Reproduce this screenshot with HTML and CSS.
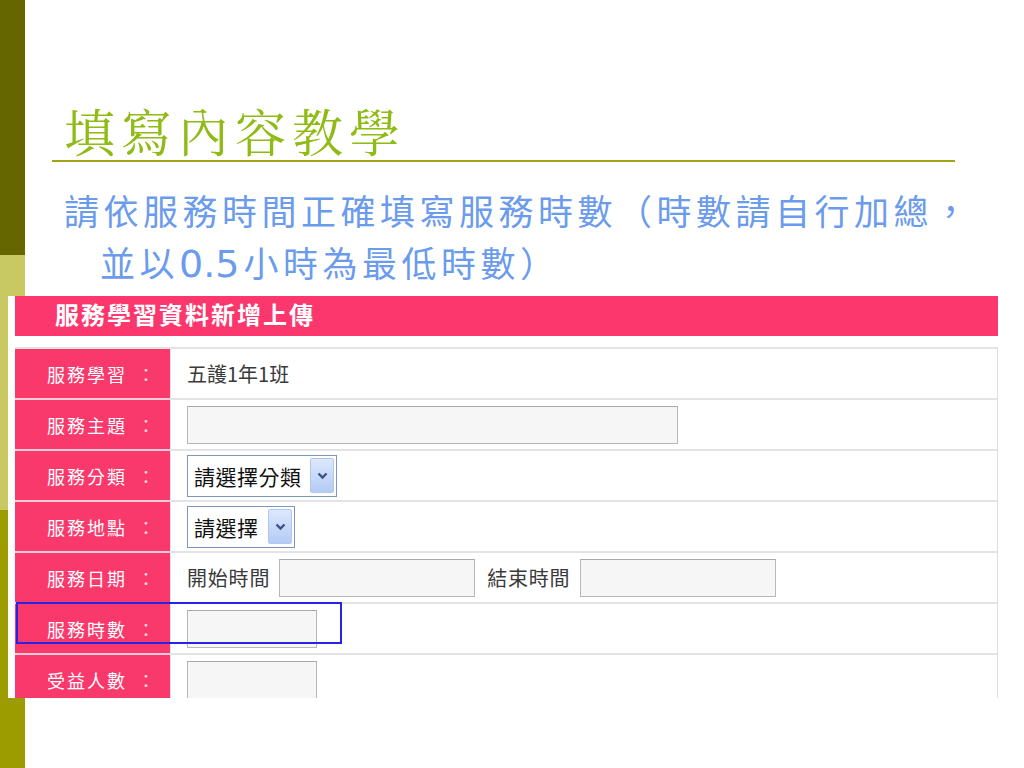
FILE: index.html
```html
<!DOCTYPE html>
<html lang="zh-Hant">
<head>
  <meta charset="UTF-8" />
  <meta name="viewport" content="width=device-width, initial-scale=1.0"/>
  <title>填寫內容教學</title>
  <link rel="stylesheet" href="styles.css">
</head>
<body>
  <div class="slide">
    <h1 class="title">填寫內容教學</h1>
    <p class="lead">請依服務時間正確填寫服務時數（時數請自行加總，<br>並以<span class="num">0.5</span>小時為最低時數）</p>

    <div class="shot">
      <div class="shot-head">服務學習資料新增上傳</div>
      <table class="form">
        <tr>
          <th>服務學習<span class="colon">：</span></th>
          <td>五護1年1班</td>
        </tr>
        <tr>
          <th>服務主題<span class="colon">：</span></th>
          <td><input type="text" class="field field-wide"></td>
        </tr>
        <tr>
          <th>服務分類<span class="colon">：</span></th>
          <td>
            <span class="select select-wide">
              <span class="select-text">請選擇分類</span>
              <span class="select-btn"><svg width="11" height="8" viewBox="0 0 11 8"><path d="M1.5 1.5 L5.5 5.5 L9.5 1.5" fill="none" stroke="#3b5283" stroke-width="2.4"/></svg></span>
            </span>
          </td>
        </tr>
        <tr>
          <th>服務地點<span class="colon">：</span></th>
          <td>
            <span class="select select-short">
              <span class="select-text">請選擇</span>
              <span class="select-btn"><svg width="11" height="8" viewBox="0 0 11 8"><path d="M1.5 1.5 L5.5 5.5 L9.5 1.5" fill="none" stroke="#3b5283" stroke-width="2.4"/></svg></span>
            </span>
          </td>
        </tr>
        <tr>
          <th>服務日期<span class="colon">：</span></th>
          <td>
            <span class="date-row">
              <span class="date-label">開始時間</span>
              <input type="text" class="field field-date">
              <span class="date-label date-label-end">結束時間</span>
              <input type="text" class="field field-date">
            </span>
          </td>
        </tr>
        <tr>
          <th>服務時數<span class="colon">：</span></th>
          <td><input type="text" class="field field-small"></td>
        </tr>
        <tr>
          <th>受益人數<span class="colon">：</span></th>
          <td><input type="text" class="field field-small"></td>
        </tr>
      </table>
      <div class="highlight"></div>
    </div>
  </div>
</body>
</html>
```

FILE: styles.css
```css
* {
  margin: 0;
  padding: 0;
  box-sizing: border-box;
}

body {
  width: 1024px;
  min-height: 768px;
  background:
    linear-gradient(to bottom, #666600 0, #666600 255px, #c9c964 255px, #c9c964 510px, #9c9c00 510px) 0 0 / 25px 768px no-repeat,
    #fff;
  font-family: "Noto Sans CJK TC", sans-serif;
  overflow: hidden;
}

.slide {
  padding-top: 100px;
}

.title {
  margin-left: 52px;
  width: 903px;
  padding-left: 12px;
  height: 62px;
  border-bottom: 2px solid #a3a31a;
  font-family: "Noto Serif CJK TC", "Noto Sans CJK TC", serif;
  font-size: 51px;
  font-weight: 400;
  line-height: 60px;
  letter-spacing: 6px;
  color: #8fbb14;
}

.lead {
  margin-top: 22px;
  padding-left: 100px;
  text-indent: -36px;
  font-size: 35px;
  line-height: 52px;
  letter-spacing: 4.5px;
  color: #6b9bec;
}

.lead .num {
  font-family: "DejaVu Sans", sans-serif;
  font-size: 38px;
  letter-spacing: 0;
  line-height: 1;
  margin-right: 4px;
}

.shot {
  position: relative;
  margin-top: 8px;
  margin-left: 8px;
  width: 1000px;
  height: 402px;
  padding: 0 9px 0 7px;
  background: #fff;
  overflow: hidden;
}

.shot-head {
  width: 983px;
  height: 40px;
  padding-left: 40px;
  background: #fc376d;
  color: #fff;
  font-size: 24px;
  font-weight: 700;
  line-height: 36px;
  letter-spacing: 2px;
}

.form {
  margin-top: 11px;
  width: 983px;
  border-collapse: separate;
  border-spacing: 0;
  border-right: 1px solid #dedede;
}

.form th,
.form td {
  height: 51px;
  vertical-align: middle;
  text-align: left;
}

.form th {
  width: 155px;
  padding-left: 32px;
  background: #f9386b;
  border-top: 2px solid #f6ccd8;
  color: #fff;
  font-size: 18px;
  font-weight: 400;
  letter-spacing: 2px;
}

.form tr:first-child th,
.form tr:first-child td {
  border-top: 2px solid #e3e3e3;
}

.form td {
  padding-left: 16px;
  border-top: 2px solid #e3e3e3;
  border-left: 1px solid #e6e6e6;
  color: #3a3a3a;
  font-size: 20px;
}

.colon {
  margin-left: 10px;
  color: #ffd9e3;
}

.field {
  display: inline-block;
  height: 38px;
  border: 1px solid #b8b8b8;
  border-top-color: #a9a9a9;
  background: #f6f6f6;
  vertical-align: middle;
}

.field-wide {
  width: 491px;
}

.field-date {
  width: 196px;
}

.field-small {
  width: 130px;
}

.select {
  display: inline-flex;
  align-items: center;
  justify-content: space-between;
  height: 42px;
  padding: 0 2px 0 6px;
  border: 1px solid #7c98b9;
  background: #fff;
  vertical-align: middle;
}

.select-wide {
  width: 150px;
}

.select-short {
  width: 108px;
}

.select-text {
  color: #111;
  font-size: 21px;
  letter-spacing: 0.5px;
}

.select-btn {
  display: flex;
  align-items: center;
  justify-content: center;
  width: 24px;
  height: 35px;
  border: 1px solid #b3c6ec;
  border-radius: 2px;
  background: linear-gradient(to bottom, #dce8fd, #b4cbf6);
}

.date-row {
  display: flex;
  align-items: center;
}

.date-label {
  font-size: 20px;
  letter-spacing: 0.8px;
  margin-right: 9px;
}

.date-label-end {
  margin-left: 12px;
  margin-right: 10px;
}

.highlight {
  position: absolute;
  left: 8px;
  top: 306px;
  width: 326px;
  height: 42px;
  border: 2px solid #2424e2;
}
```
